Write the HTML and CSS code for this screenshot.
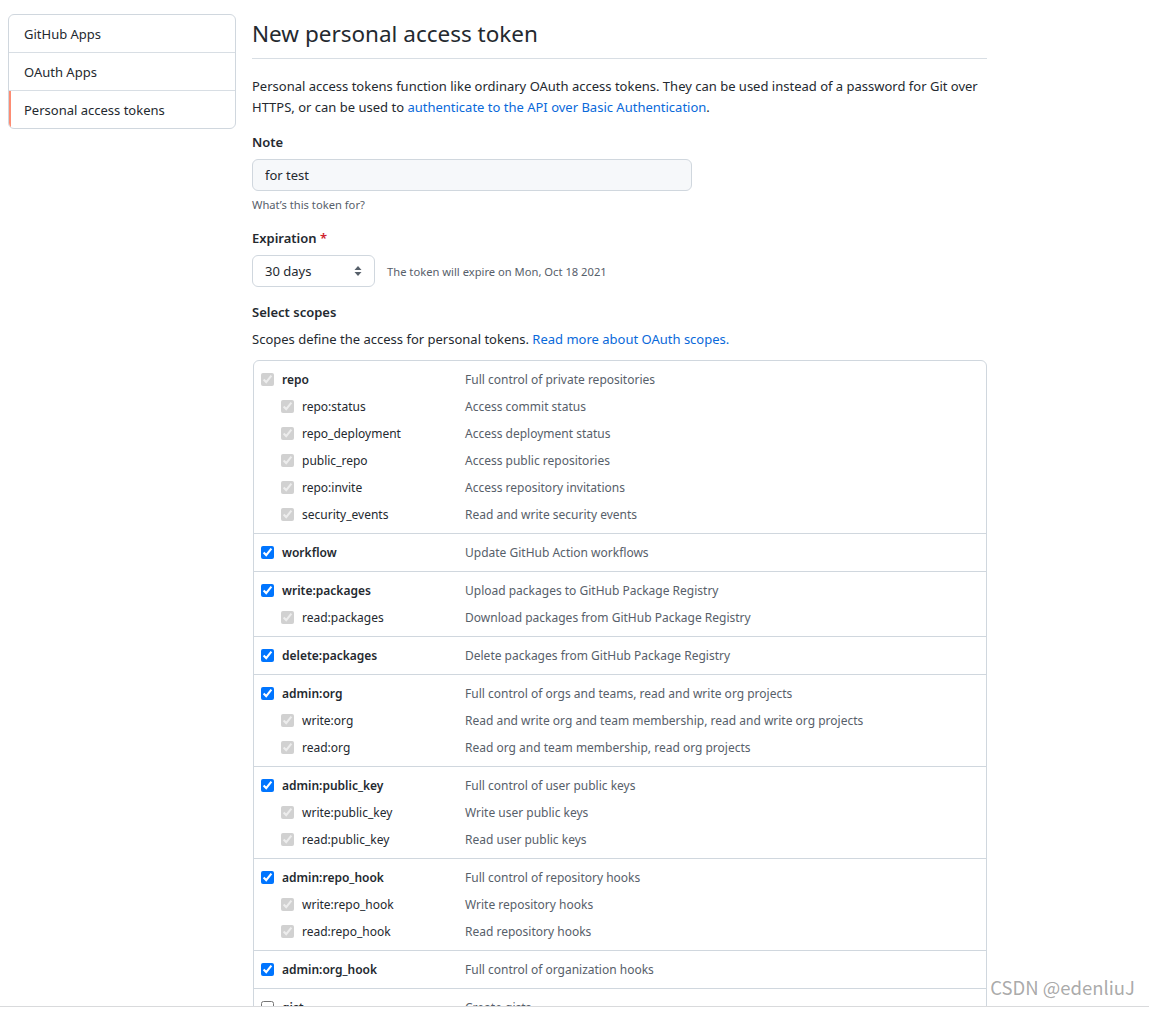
FILE: index.html
```html
<!DOCTYPE html>
<html lang="en">
<head>
<meta charset="utf-8">
<title>New personal access token</title>
<link rel="stylesheet" href="styles.css">
</head>
<body>
<div class="frame">
  <div class="layout">
    <nav class="menu">
      <a class="menu-item" href="#">GitHub Apps</a>
      <a class="menu-item" href="#">OAuth Apps</a>
      <a class="menu-item selected" href="#">Personal access tokens</a>
    </nav>
    <main class="main">
      <h2 class="title">New personal access token</h2>
      <p class="intro">Personal access tokens function like ordinary OAuth access tokens. They can be used instead of a password for Git over HTTPS, or can be used to <a href="#">authenticate to the API over Basic Authentication</a>.</p>

      <div class="group">
        <label class="label">Note</label>
        <input class="input" type="text" value="for test">
        <p class="hint">What’s this token for?</p>
      </div>

      <div class="group">
        <label class="label">Expiration <span class="req">*</span></label>
        <div class="exp-row">
          <div class="select"><span>30 days</span>
            <svg class="arrows" width="8" height="12" viewBox="0 0 8 12"><path d="M4 1 L7.5 5 H0.5 Z" fill="#57606a"/><path d="M4 11 L7.5 7 H0.5 Z" fill="#57606a"/></svg>
          </div>
          <span class="exp-note">The token will expire on Mon, Oct 18 2021</span>
        </div>
      </div>

      <div class="group scopes-head">
        <label class="label">Select scopes</label>
        <p class="scopes-desc">Scopes define the access for personal tokens. <a href="#">Read more about OAuth scopes.</a></p>
      </div>

      <div class="scopes">
        <div class="scope-group">
          <div class="row top"><span class="name"><input type="checkbox" checked disabled><b>repo</b></span><span class="desc">Full control of private repositories</span></div>
          <div class="row sub"><span class="name"><input type="checkbox" checked disabled>repo:status</span><span class="desc">Access commit status</span></div>
          <div class="row sub"><span class="name"><input type="checkbox" checked disabled>repo_deployment</span><span class="desc">Access deployment status</span></div>
          <div class="row sub"><span class="name"><input type="checkbox" checked disabled>public_repo</span><span class="desc">Access public repositories</span></div>
          <div class="row sub"><span class="name"><input type="checkbox" checked disabled>repo:invite</span><span class="desc">Access repository invitations</span></div>
          <div class="row sub"><span class="name"><input type="checkbox" checked disabled>security_events</span><span class="desc">Read and write security events</span></div>
        </div>
        <div class="scope-group">
          <div class="row top"><span class="name"><input type="checkbox" checked><b>workflow</b></span><span class="desc">Update GitHub Action workflows</span></div>
        </div>
        <div class="scope-group">
          <div class="row top"><span class="name"><input type="checkbox" checked><b>write:packages</b></span><span class="desc">Upload packages to GitHub Package Registry</span></div>
          <div class="row sub"><span class="name"><input type="checkbox" checked disabled>read:packages</span><span class="desc">Download packages from GitHub Package Registry</span></div>
        </div>
        <div class="scope-group">
          <div class="row top"><span class="name"><input type="checkbox" checked><b>delete:packages</b></span><span class="desc">Delete packages from GitHub Package Registry</span></div>
        </div>
        <div class="scope-group">
          <div class="row top"><span class="name"><input type="checkbox" checked><b>admin:org</b></span><span class="desc">Full control of orgs and teams, read and write org projects</span></div>
          <div class="row sub"><span class="name"><input type="checkbox" checked disabled>write:org</span><span class="desc">Read and write org and team membership, read and write org projects</span></div>
          <div class="row sub"><span class="name"><input type="checkbox" checked disabled>read:org</span><span class="desc">Read org and team membership, read org projects</span></div>
        </div>
        <div class="scope-group">
          <div class="row top"><span class="name"><input type="checkbox" checked><b>admin:public_key</b></span><span class="desc">Full control of user public keys</span></div>
          <div class="row sub"><span class="name"><input type="checkbox" checked disabled>write:public_key</span><span class="desc">Write user public keys</span></div>
          <div class="row sub"><span class="name"><input type="checkbox" checked disabled>read:public_key</span><span class="desc">Read user public keys</span></div>
        </div>
        <div class="scope-group">
          <div class="row top"><span class="name"><input type="checkbox" checked><b>admin:repo_hook</b></span><span class="desc">Full control of repository hooks</span></div>
          <div class="row sub"><span class="name"><input type="checkbox" checked disabled>write:repo_hook</span><span class="desc">Write repository hooks</span></div>
          <div class="row sub"><span class="name"><input type="checkbox" checked disabled>read:repo_hook</span><span class="desc">Read repository hooks</span></div>
        </div>
        <div class="scope-group">
          <div class="row top"><span class="name"><input type="checkbox" checked><b>admin:org_hook</b></span><span class="desc">Full control of organization hooks</span></div>
        </div>
        <div class="scope-group">
          <div class="row top"><span class="name"><input type="checkbox"><b>gist</b></span><span class="desc">Create gists</span></div>
        </div>
        <div class="scope-group">
          <div class="row top"><span class="name"><input type="checkbox"><b>notifications</b></span><span class="desc">Access notifications</span></div>
        </div>
      </div>
    </main>
  </div>
  <div class="watermark">CSDN @edenliuJ</div>
</div>
</body>
</html>
```
FILE: styles.css
```css
* { box-sizing: border-box; }
html, body { margin: 0; padding: 0; background: #fff; }
body {
  font-family: "Noto Sans", "Liberation Sans", sans-serif;
  font-size: 13px;
  line-height: 21px;
  color: #24292f;
}
a { color: #0969da; text-decoration: none; }
.frame {
  position: relative;
  height: 1007px;
  overflow: hidden;
  border-bottom: 1px solid #d9dadc;
}
.layout {
  display: flex;
  align-items: flex-start;
  gap: 16px;
  padding: 14px 0 0 8px;
}
.menu {
  width: 228px;
  flex: none;
  border: 1px solid #d0d7de;
  border-radius: 6px;
  overflow: hidden;
  display: flex;
  flex-direction: column;
}
.menu-item {
  display: block;
  height: 38px;
  line-height: 37px;
  padding-top: 1px;
  padding-left: 15px;
  color: #24292f;
  border-top: 1px solid #d8dee4;
}
.menu-item:first-child { border-top: none; height: 37px; }
.menu-item.selected { box-shadow: inset 2px 0 0 #fd8c73; }
.main { width: 735px; flex: none; }
.title {
  margin: 2px 0 0;
  font-size: 22.5px;
  font-weight: 400;
  line-height: 36px;
  padding-bottom: 6px;
  border-bottom: 1px solid #d8dee4;
}
.intro { margin: 17px 0 0; }
.group { margin-top: 14px; }
.group.scopes-head { margin-top: 15px; }
.label { display: block; font-weight: 600; }
.req { color: #cf222e; }
.input {
  display: block;
  margin-top: 6px;
  width: 440px;
  height: 32px;
  padding: 0 12px;
  font: inherit;
  color: #24292f;
  background: #f6f8fa;
  border: 1px solid #d0d7de;
  border-radius: 6px;
}
.hint {
  margin: 5px 0 0;
  font-size: 11.2px;
  line-height: 18px;
  color: #57606a;
}
.exp-row {
  margin-top: 6px;
  display: flex;
  align-items: center;
  gap: 12px;
}
.select {
  width: 123px;
  height: 32px;
  border: 1px solid #d0d7de;
  border-radius: 6px;
  padding: 0 12px;
  display: flex;
  align-items: center;
  justify-content: space-between;
}
.exp-note { font-size: 11.2px; color: #57606a; }
.scopes-desc { margin: 6px 0 0; }
.scopes {
  margin-top: 10px;
  margin-left: 1px;
  width: 734px;
  border: 1px solid #d0d7de;
  border-radius: 6px;
  font-size: 12px;
}
.scope-group {
  padding: 5px 0;
  border-top: 1px solid #d0d7de;
}
.scope-group:first-child { border-top: none; }
.row {
  display: grid;
  grid-template-columns: 211px 1fr;
  height: 27px;
  align-items: center;
}
.name { display: flex; align-items: center; padding-left: 7px; }
.row.sub .name { padding-left: 27px; }
.name input { margin: 0 8px 0 0; width: 13px; height: 13px; }
.name b { font-weight: 600; }
.desc { color: #57606a; }
.watermark {
  position: absolute;
  right: 14px;
  bottom: 8px;
  font-family: "Noto Sans CJK SC", "Noto Sans", sans-serif;
  font-size: 18.5px;
  color: rgba(160,160,160,0.9);
}
```
